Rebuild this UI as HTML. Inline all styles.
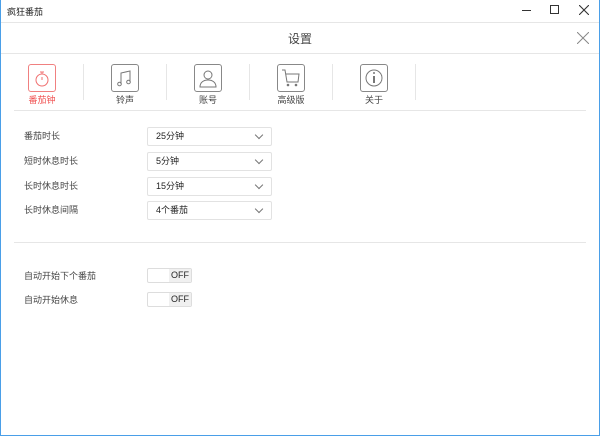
<!DOCTYPE html><html><head><meta charset="utf-8"><style>
*{margin:0;padding:0;box-sizing:border-box}
body{width:600px;height:436px;background:#fff;font-family:"Liberation Sans","Noto Sans CJK SC",sans-serif;position:relative;overflow:hidden;color:#333}
.frame{position:absolute;inset:0;border:1px solid #4a9fe8;border-top:none}
.abs{position:absolute}
.t{font-size:9px}
.hl{position:absolute;height:1px;background:#e6e6e6}
.ico{position:absolute;top:64px;width:28px;height:28px;border:1px solid #888;border-radius:3px}
.lab{position:absolute;top:93px;width:60px;text-align:center;font-size:9px;color:#444}
.vs{position:absolute;top:64px;width:1px;height:36px;background:#e6e6e6}
.sel{position:absolute;left:147px;width:125px;height:19px;border:1px solid #e2e2e2;border-radius:2px;font-size:9px;line-height:16px;padding-left:8px;color:#222}
.sel:after{content:"";position:absolute;right:9px;top:4px;width:5px;height:5px;border-right:1px solid #777;border-bottom:1px solid #777;transform:rotate(45deg)}
.rl{position:absolute;left:24px;font-size:9px;color:#444}
.tg{position:absolute;left:147px;width:45px;height:15px;border:1px solid #ddd;border-radius:2px;background:#fff}
.tg span{position:absolute;right:0;top:0;width:22px;height:13px;background:#f0f0f0;font-size:9px;line-height:13px;text-align:center;color:#222}
</style></head><body>
<div class="frame"></div>
<div class="abs t" style="left:7px;top:5px;color:#222">疯狂番茄</div>
<div class="abs" style="left:522px;top:10px;width:9px;height:1px;background:#333"></div>
<div class="abs" style="left:550px;top:5px;width:9px;height:9px;border:1px solid #333"></div>
<svg class="abs" style="left:579px;top:5px" width="10" height="10"><path d="M0 0L10 10M10 0L0 10" stroke="#333" stroke-width="1.1"/></svg>
<div class="hl" style="left:1px;right:1px;top:22px"></div>
<div class="abs" style="left:0;width:600px;top:30px;text-align:center;font-size:12px;color:#444">设置</div>
<svg class="abs" style="left:577px;top:32px" width="12" height="12"><path d="M0 0L12 12M12 0L0 12" stroke="#888" stroke-width="1"/></svg>
<div class="hl" style="left:1px;right:1px;top:53px"></div>

<div class="ico" style="left:28px;border-color:#f08080"><svg width="26" height="26"><circle cx="13" cy="15" r="6" fill="none" stroke="#f07070"/><path d="M11 7h4M13 7v2M13 12v3" stroke="#f07070"/></svg></div>
<div class="lab" style="left:12px;color:#f05050">番茄钟</div>
<div class="vs" style="left:83px"></div>
<div class="ico" style="left:111px"><svg width="26" height="26"><path d="M9 19V8l9-2v11" fill="none" stroke="#777"/><circle cx="7.5" cy="19" r="1.8" fill="none" stroke="#777"/><circle cx="16.5" cy="17" r="1.8" fill="none" stroke="#777"/></svg></div>
<div class="lab" style="left:95px">铃声</div>
<div class="vs" style="left:166px"></div>
<div class="ico" style="left:194px"><svg width="26" height="26"><circle cx="13" cy="10" r="4" fill="none" stroke="#777"/><path d="M5 22c0-5 4-7 8-7s8 2 8 7z" fill="none" stroke="#777"/></svg></div>
<div class="lab" style="left:178px">账号</div>
<div class="vs" style="left:249px"></div>
<div class="ico" style="left:277px"><svg width="26" height="26"><path d="M4 5h3l2 12h11l1-8H8" fill="none" stroke="#777"/><circle cx="10" cy="20" r="1.3" fill="#777"/><circle cx="18" cy="20" r="1.3" fill="#777"/></svg></div>
<div class="lab" style="left:261px">高级版</div>
<div class="vs" style="left:332px"></div>
<div class="ico" style="left:360px"><svg width="26" height="26"><circle cx="13" cy="13" r="8" fill="none" stroke="#777"/><path d="M13 11v7" stroke="#777" stroke-width="2"/><circle cx="13" cy="8" r="1" fill="#777"/></svg></div>
<div class="lab" style="left:344px">关于</div>
<div class="vs" style="left:415px"></div>
<div class="hl" style="left:14px;right:14px;top:110px"></div>

<div class="rl" style="top:129px">番茄时长</div><div class="sel" style="top:127px">25分钟</div>
<div class="rl" style="top:154px">短时休息时长</div><div class="sel" style="top:152px">5分钟</div>
<div class="rl" style="top:179px">长时休息时长</div><div class="sel" style="top:177px">15分钟</div>
<div class="rl" style="top:203px">长时休息间隔</div><div class="sel" style="top:201px">4个番茄</div>
<div class="hl" style="left:14px;right:14px;top:242px"></div>
<div class="rl" style="top:269px">自动开始下个番茄</div><div class="tg" style="top:268px"><span>OFF</span></div>
<div class="rl" style="top:293px">自动开始休息</div><div class="tg" style="top:292px"><span>OFF</span></div>
</body></html>
